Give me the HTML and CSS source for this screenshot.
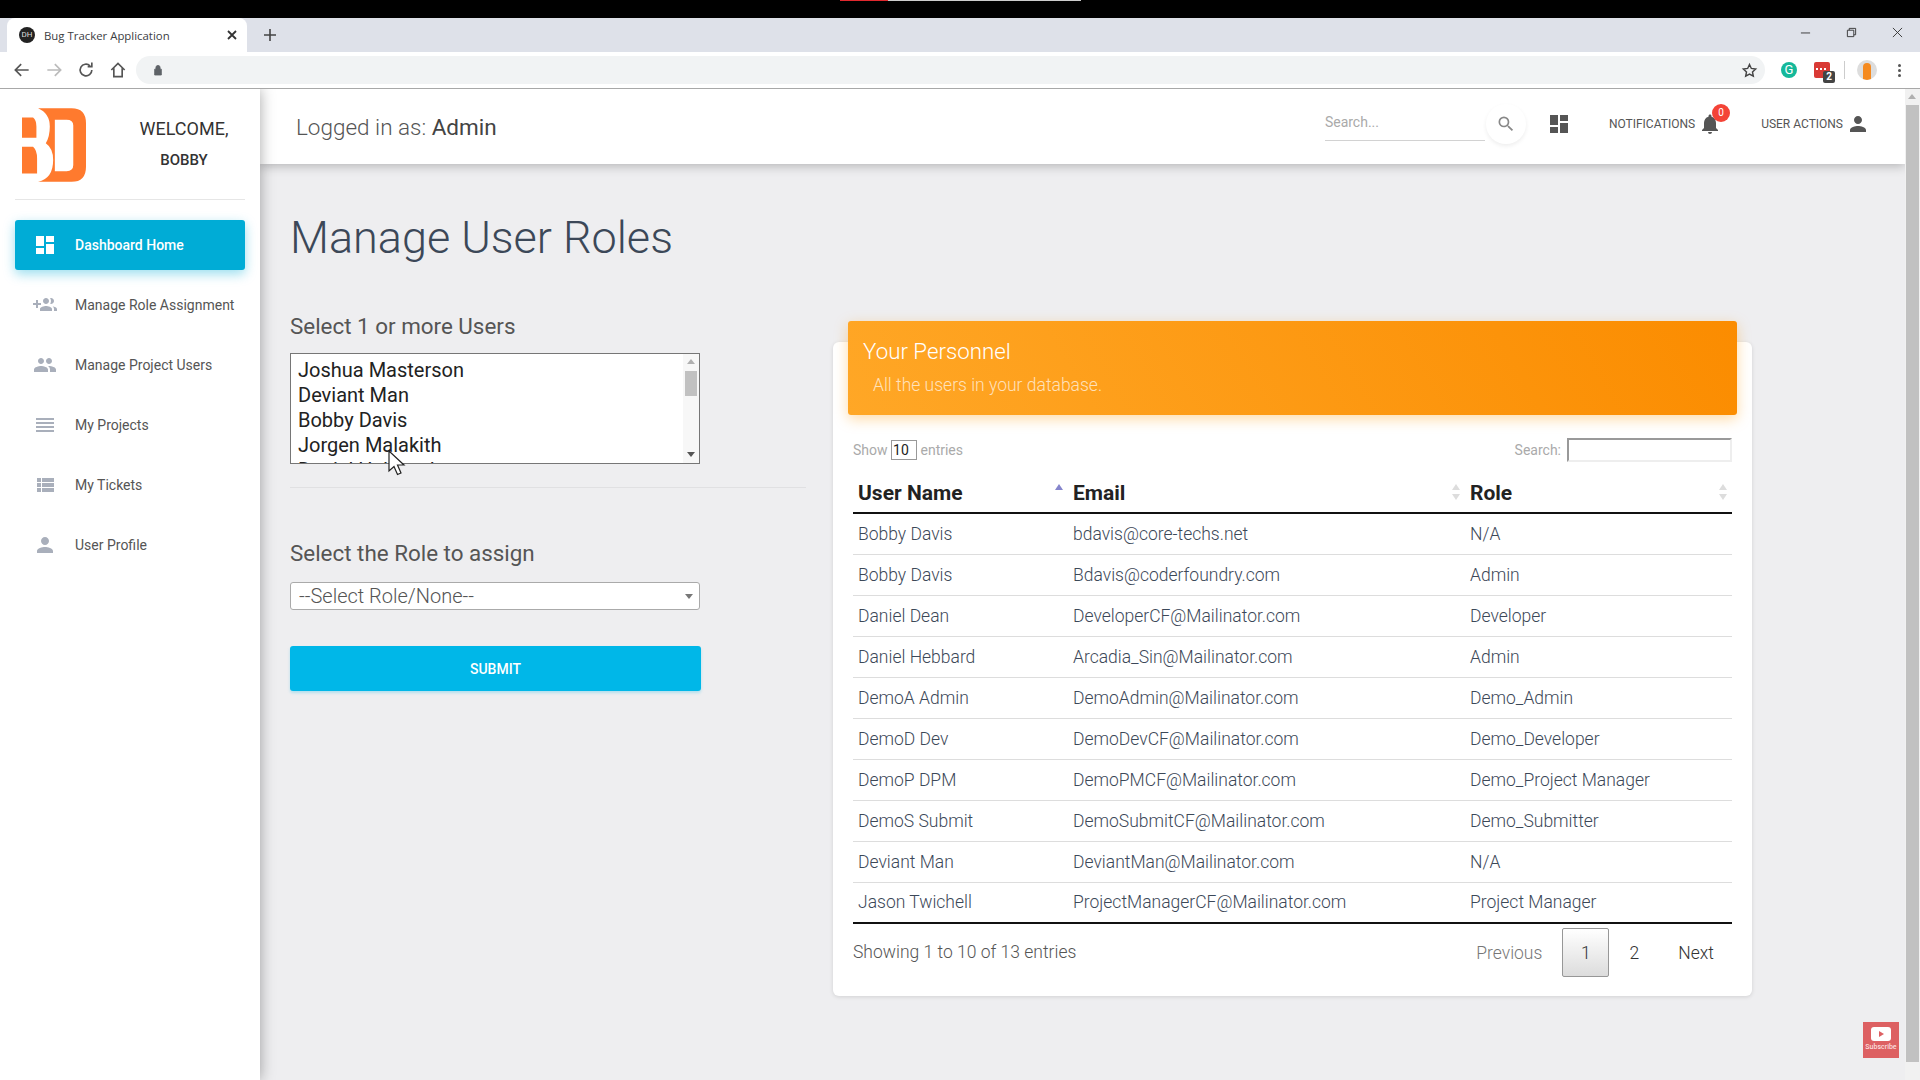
FILE: index.html
```html
<!DOCTYPE html>
<html lang="en">
<head>
  <meta charset="UTF-8">
  <meta name="viewport" content="width=device-width, initial-scale=1.0">
  <title>Bug Tracker Application</title>
  <link rel="stylesheet" href="styles.css">
</head>
<body>
  <div class="video-bar"><span class="video-played"></span><span class="video-buffered"></span></div>

  <div class="tabstrip">
    <div class="tab">
      <span class="favicon">DH</span>
      <span class="tab-title">Bug Tracker Application</span>
      <svg class="tab-close" viewBox="0 0 12 12"><path d="M2 2l8 8M10 2l-8 8"/></svg>
    </div>
    <svg class="new-tab" viewBox="0 0 14 14"><path d="M7 1v12M1 7h12"/></svg>
    <div class="window-controls">
      <svg viewBox="0 0 12 12"><path d="M1 6.500h10"/></svg>
      <svg viewBox="0 0 12 12"><path d="M1.500 3.500h7v7h-7zM3.500 3.500v-2h7v7h-2"/></svg>
      <svg viewBox="0 0 12 12"><path d="M1 1l10 10M11 1L1 11"/></svg>
    </div>
  </div>

  <div class="toolbar">
    <svg class="nav-icon" viewBox="0 0 24 24"><path d="M20 12H5M11 5l-7 7 7 7"/></svg>
    <svg class="nav-icon dim" viewBox="0 0 24 24"><path d="M4 12h15M13 5l7 7-7 7"/></svg>
    <svg class="nav-icon" viewBox="0 0 24 24"><path d="M19 12a7 7 0 1 1-2.200-5.100M19 3v5h-5"/></svg>
    <svg class="nav-icon" viewBox="0 0 24 24"><path d="M4 12l8-8 8 8M7 10v10h10V10"/></svg>
    <div class="omnibox">
      <svg class="lock" viewBox="0 0 12 14"><path d="M2 6h8v7H2zM3.500 6V4a2.500 2.500 0 0 1 5 0v2"/></svg>
      <svg class="star" viewBox="0 0 24 24"><path d="M12 3.500l2.600 5.600 6.100.7-4.500 4.200 1.200 6L12 17l-5.400 3 1.200-6-4.500-4.200 6.100-.7z"/></svg>
    </div>
    <div class="extensions">
      <span class="ext-grammarly">G</span>
      <span class="ext-red"><span class="ext-dots"></span><span class="ext-count">2</span></span>
      <span class="ext-divider"></span>
      <span class="ext-avatar"><span></span></span>
      <span class="ext-menu"><i></i><i></i><i></i></span>
    </div>
  </div>

  <div class="page">
    <aside class="sidebar">
      <div class="brand">
        <svg class="logo" viewBox="37 40 191 220">
          <path fill="#ff7a2e" fill-rule="evenodd" d="M85 40H185Q228 40 228 85V215Q228 260 185 260H85Q130 250 130 195Q130 160 108 145Q120 125 120 95Q120 55 85 40ZM135 75V228H170Q190 228 190 210V92Q190 75 170 75Z"/>
          <path fill="#ff7a2e" d="M37 68H70Q80 75 80 95V128H37ZM37 155H70Q82 165 82 190V235H37Z"/>
        </svg>
        <div class="welcome">
          <div class="welcome-line">WELCOME,</div>
          <div class="welcome-name">BOBBY</div>
        </div>
      </div>
      <nav class="nav">
        <a class="nav-item active">
          <svg viewBox="0 0 24 24"><path d="M3 13h8V3H3zm0 8h8v-6H3zm10 0h8V11h-8zm0-18v6h8V3z"/></svg>
          Dashboard Home
        </a>
        <a class="nav-item">
          <svg viewBox="0 0 24 24"><path d="M8 10H5V7H3v3H0v2h3v3h2v-3h3zm10 1c1.660 0 3-1.340 3-3s-1.340-3-3-3c-.3 0-.6.05-.9.140.57.810.9 1.790.9 2.860s-.33 2.050-.9 2.860c.3.090.6.140.9.140zm-5 0c1.660 0 3-1.340 3-3s-1.340-3-3-3-3 1.340-3 3 1.340 3 3 3zm6.600 2.160c.83.730 1.400 1.660 1.400 2.840v2h3v-2c0-1.540-2.370-2.490-4.400-2.840zM13 13c-2 0-6 1-6 3v2h12v-2c0-2-4-3-6-3z"/></svg>
          Manage Role Assignment
        </a>
        <a class="nav-item">
          <svg viewBox="0 0 24 24"><path d="M16 11c1.660 0 2.990-1.340 2.990-3S17.660 5 16 5s-3 1.340-3 3 1.340 3 3 3zm-8 0c1.660 0 2.990-1.340 2.990-3S9.660 5 8 5 5 6.340 5 8s1.340 3 3 3zm0 2c-2.330 0-7 1.170-7 3.500V19h14v-2.500C15 14.170 10.330 13 8 13zm8 0c-.29 0-.62.020-.97.050 1.160.840 1.970 1.970 1.970 3.450V19h6v-2.500c0-2.330-4.670-3.500-7-3.500z"/></svg>
          Manage Project Users
        </a>
        <a class="nav-item">
          <svg viewBox="0 0 24 24"><path d="M3 15h18v-2H3zm0 4h18v-2H3zm0-8h18V9H3zm0-6v2h18V5z"/></svg>
          My Projects
        </a>
        <a class="nav-item">
          <svg viewBox="0 0 24 24"><path d="M4 14h4v-4H4zm0 5h4v-4H4zM4 9h4V5H4zm5 5h12v-4H9zm0 5h12v-4H9zM9 5v4h12V5z"/></svg>
          My Tickets
        </a>
        <a class="nav-item">
          <svg viewBox="0 0 24 24"><path d="M12 12c2.210 0 4-1.790 4-4s-1.790-4-4-4-4 1.790-4 4 1.790 4 4 4zm0 2c-2.670 0-8 1.340-8 4v2h16v-2c0-2.660-5.330-4-8-4z"/></svg>
          User Profile
        </a>
      </nav>
    </aside>

    <div class="content">
      <header class="topbar">
        <div class="logged-in">Logged in as: <span>Admin</span></div>
        <div class="top-actions">
          <div class="top-search">Search...</div>
          <span class="search-btn">
            <svg viewBox="0 0 24 24"><path d="M15.500 14h-.79l-.28-.27A6.470 6.470 0 0 0 16 9.500 6.500 6.500 0 1 0 9.500 16c1.610 0 3.090-.59 4.230-1.570l.27.28v.79l5 4.990L20.490 19zm-6 0C7.010 14 5 11.990 5 9.500S7.010 5 9.500 5 14 7.010 14 9.500 11.990 14 9.500 14z"/></svg>
          </span>
          <svg class="top-dash" viewBox="0 0 24 24"><path d="M3 13h8V3H3zm0 8h8v-6H3zm10 0h8V11h-8zm0-18v6h8V3z"/></svg>
          <div class="top-link notif">
            NOTIFICATIONS
            <span class="bell">
              <svg viewBox="0 0 24 24"><path d="M12 22c1.100 0 2-.9 2-2h-4a2 2 0 0 0 2 2zm6-6v-5c0-3.070-1.640-5.640-4.500-6.320V4c0-.83-.67-1.500-1.500-1.500s-1.500.67-1.500 1.500v.68C7.630 5.360 6 7.920 6 11v5l-2 2v1h16v-1z"/></svg>
              <span class="badge">0</span>
            </span>
          </div>
          <div class="top-link">
            USER ACTIONS
            <svg class="top-user" viewBox="0 0 24 24"><path d="M12 12c2.210 0 4-1.790 4-4s-1.790-4-4-4-4 1.790-4 4 1.790 4 4 4zm0 2c-2.670 0-8 1.340-8 4v2h16v-2c0-2.660-5.330-4-8-4z"/></svg>
          </div>
        </div>
      </header>

      <main class="main">
        <h1 class="page-title">Manage User Roles</h1>
        <div class="columns">
          <section class="form-col">
            <h2 class="form-label">Select 1 or more Users</h2>
            <div class="listbox">
              <div class="listbox-items">
                <div>Joshua Masterson</div>
                <div>Deviant Man</div>
                <div>Bobby Davis</div>
                <div>Jorgen Malakith</div>
                <div>Daniel Hebbard</div>
              </div>
              <div class="list-scroll">
                <span class="arrow-up"></span>
                <span class="list-thumb"></span>
                <span class="arrow-down"></span>
              </div>
            </div>
            <hr class="divider">
            <h2 class="form-label role-label">Select the Role to assign</h2>
            <div class="role-select">--Select Role/None--<span class="arrow-down"></span></div>
            <button class="submit-btn">SUBMIT</button>
          </section>

          <section class="card">
            <div class="card-header">
              <h3>Your Personnel</h3>
              <p>All the users in your database.</p>
            </div>
            <div class="table-tools">
              <div>Show <span class="length-box">10</span> entries</div>
              <div class="table-search">Search: <span class="search-box"></span></div>
            </div>
            <table class="users">
              <thead>
                <tr>
                  <th class="col-name">User Name<span class="sort sorted"></span></th>
                  <th class="col-email">Email<span class="sort"></span></th>
                  <th>Role<span class="sort"></span></th>
                </tr>
              </thead>
              <tbody>
                <tr><td>Bobby Davis</td><td>bdavis@core-techs.net</td><td>N/A</td></tr>
                <tr><td>Bobby Davis</td><td>Bdavis@coderfoundry.com</td><td>Admin</td></tr>
                <tr><td>Daniel Dean</td><td>DeveloperCF@Mailinator.com</td><td>Developer</td></tr>
                <tr><td>Daniel Hebbard</td><td>Arcadia_Sin@Mailinator.com</td><td>Admin</td></tr>
                <tr><td>DemoA Admin</td><td>DemoAdmin@Mailinator.com</td><td>Demo_Admin</td></tr>
                <tr><td>DemoD Dev</td><td>DemoDevCF@Mailinator.com</td><td>Demo_Developer</td></tr>
                <tr><td>DemoP DPM</td><td>DemoPMCF@Mailinator.com</td><td>Demo_Project Manager</td></tr>
                <tr><td>DemoS Submit</td><td>DemoSubmitCF@Mailinator.com</td><td>Demo_Submitter</td></tr>
                <tr><td>Deviant Man</td><td>DeviantMan@Mailinator.com</td><td>N/A</td></tr>
                <tr><td>Jason Twichell</td><td>ProjectManagerCF@Mailinator.com</td><td>Project Manager</td></tr>
              </tbody>
            </table>
            <div class="table-foot">
              <div class="table-info">Showing 1 to 10 of 13 entries</div>
              <div class="pager">
                <span class="page-prev">Previous</span>
                <span class="page-current">1</span>
                <span class="page-num">2</span>
                <span class="page-next">Next</span>
              </div>
            </div>
          </section>
        </div>
      </main>
    </div>

    <div class="page-scroll">
      <span class="arrow-up"></span>
      <span class="page-thumb"></span>
    </div>

    <div class="subscribe">
      <span class="sub-icon"><span></span></span>
      <span class="sub-text">Subscribe</span>
    </div>

    <svg class="cursor" viewBox="0 0 18 26"><path d="M1 1v20l5-4.500 3.500 8 3.500-1.500-3.500-8H16z"/></svg>
  </div>
</body>
</html>
```

FILE: styles.css
```css
* {
  box-sizing: border-box;
}
html, body {
  height: 100%;
}
body {
  margin: 0;
  display: flex;
  flex-direction: column;
  overflow: hidden;
  font-family: Roboto, "Liberation Sans", sans-serif;
  background-color: #eeeef0;
  color: #3c4858;
}

/* browser chrome */
.video-bar {
  height: 18px;
  flex: none;
  display: flex;
  align-items: flex-start;
  padding-left: 840px;
  background: #000;
}
.video-played {
  width: 48px;
  height: 1px;
  background: #e0282e;
}
.video-buffered {
  width: 193px;
  height: 1px;
  background: #ccc;
}
.tabstrip {
  height: 34px;
  flex: none;
  display: flex;
  align-items: center;
  background: #dee1e9;
}
.tab {
  width: 240px;
  height: 34px;
  margin-left: 7px;
  padding: 0 9px 0 12px;
  display: flex;
  align-items: center;
  background: #fff;
  border-radius: 8px 8px 0 0;
}
.favicon {
  width: 16px;
  height: 16px;
  border-radius: 50%;
  background: #222;
  color: #ddd;
  font-size: 8px;
  line-height: 16px;
  text-align: center;
}
.tab-title {
  margin-left: 9px;
  flex: 1;
  font-size: 11.4px;
  color: #3c4043;
  font-family: "Open Sans", sans-serif;
}
.tab-close {
  width: 12px;
  height: 12px;
  fill: none;
  stroke: #333;
  stroke-width: 1.800;
}
.new-tab {
  width: 14px;
  height: 14px;
  margin-left: 16px;
  fill: none;
  stroke: #444;
  stroke-width: 1.600;
}
.window-controls {
  margin-left: auto;
  padding-right: 17px;
  display: flex;
  gap: 35px;
  margin-top: -5px;
}
.window-controls svg {
  width: 11px;
  height: 11px;
  fill: none;
  stroke: #333;
  stroke-width: 1;
}
.toolbar {
  position: relative;
  z-index: 5;
  height: 37px;
  flex: none;
  display: flex;
  align-items: center;
  padding-left: 12px;
  background: #fff;
  border-bottom: 1px solid #a8a8a8;
}
.nav-icon {
  width: 20px;
  height: 20px;
  margin-right: 12px;
  fill: none;
  stroke: #555;
  stroke-width: 2;
}
.nav-icon.dim {
  stroke: #bbb;
}
.omnibox {
  width: 1629px;
  height: 28px;
  margin-left: -4px;
  padding: 0 7px 0 17px;
  display: flex;
  align-items: center;
  justify-content: space-between;
  background: #f1f3f4;
  border-radius: 14px;
}
.lock {
  width: 10px;
  height: 12px;
  fill: #5f6368;
  stroke: #5f6368;
}
.star {
  width: 17px;
  height: 17px;
  fill: none;
  stroke: #444;
  stroke-width: 2;
}
.extensions {
  display: flex;
  align-items: center;
  margin-left: 16px;
}
.ext-grammarly {
  width: 16px;
  height: 16px;
  border-radius: 50%;
  background: #15b89a;
  color: #fff;
  font-size: 13px;
  line-height: 16px;
  text-align: center;
}
.ext-red {
  position: relative;
  width: 16px;
  height: 16px;
  margin-left: 17px;
  background: #d93a35;
  border-radius: 2px;
}
.ext-dots {
  position: absolute;
  left: 2px;
  top: 6px;
  width: 2px;
  height: 2px;
  background: #fff;
  box-shadow: 4px 0 #fff, 8px 0 #fff;
}
.ext-count {
  position: absolute;
  left: 9px;
  top: 9px;
  width: 12px;
  height: 12px;
  background: #444;
  color: #fff;
  border-radius: 2px;
  font-size: 10px;
  font-weight: 700;
  line-height: 12px;
  text-align: center;
}
.ext-divider {
  width: 1px;
  height: 18px;
  margin-left: 14px;
  background: #ccc;
}
.ext-avatar {
  width: 20px;
  height: 20px;
  margin-left: 12px;
  display: flex;
  justify-content: center;
  background: #ddd;
  border-radius: 50%;
  overflow: hidden;
}
.ext-avatar span {
  width: 8px;
  height: 20px;
  margin-top: 3px;
  background: #f58a1f;
  border-radius: 4px 4px 0 0;
}
.ext-menu {
  margin-left: 21px;
  display: flex;
  flex-direction: column;
  gap: 2px;
}
.ext-menu i {
  width: 3px;
  height: 3px;
  background: #555;
  border-radius: 50%;
}

/* page */
.page {
  position: relative;
  flex: 1;
  min-height: 0;
  display: flex;
}
.sidebar {
  width: 260px;
  flex: none;
  background: #fff;
  box-shadow: 0 0 14px rgba(0, 0, 0, 0.35);
  z-index: 2;
  padding: 0 15px;
}
.brand {
  height: 111px;
  padding: 19px 0 0 7px;
  display: flex;
  border-bottom: 1px solid #e6e6e6;
}
.logo {
  width: 64px;
  height: 74px;
}
.welcome {
  flex: 1;
  padding: 11px 0 0 37px;
  text-align: center;
  color: #333;
}
.welcome-line {
  font-size: 18px;
  line-height: 20px;
}
.welcome-name {
  margin-top: 11px;
  font-size: 15px;
  line-height: 20px;
  font-weight: 500;
}
.nav {
  padding-top: 20px;
}
.nav-item {
  height: 50px;
  margin-bottom: 10px;
  padding-left: 18px;
  display: flex;
  align-items: center;
  gap: 18px;
  border-radius: 3px;
  font-size: 14px;
  color: #555;
}
.nav-item svg {
  width: 24px;
  height: 24px;
  fill: #a9afbb;
}
.nav-item.active {
  background: #00acd6;
  color: #fff;
  font-weight: 500;
  box-shadow: 0 4px 12px rgba(0, 172, 214, 0.4);
}
.nav-item.active svg {
  fill: #fff;
}
.content {
  flex: 1;
  min-width: 0;
  display: flex;
  flex-direction: column;
}
.topbar {
  height: 75px;
  flex: none;
  padding: 0 35px 0 36px;
  display: flex;
  align-items: center;
  justify-content: space-between;
  background: #fff;
  box-shadow: 0 2px 10px rgba(0, 0, 0, 0.25);
}
.logged-in {
  font-size: 22.5px;
  font-weight: 300;
  color: #555;
}
.logged-in span {
  font-weight: 400;
  color: #444;
}
.top-actions {
  display: flex;
  align-items: center;
  margin-top: -5px;
}
.top-search {
  width: 160px;
  height: 34px;
  padding-top: 7px;
  border-bottom: 1px solid #d2d2d2;
  font-size: 14px;
  color: #aaa;
}
.search-btn {
  width: 40px;
  height: 40px;
  margin-left: 1px;
  display: flex;
  align-items: center;
  justify-content: center;
  border-radius: 50%;
  box-shadow: 0 2px 4px rgba(0, 0, 0, 0.07);
}
.search-btn svg {
  width: 20px;
  height: 20px;
  fill: #888;
}
.top-dash {
  width: 24px;
  height: 24px;
  margin-left: 21px;
  fill: #555;
}
.top-link {
  display: flex;
  align-items: center;
  font-size: 12px;
  color: #555;
}
.notif {
  margin-left: 38px;
}
.bell {
  position: relative;
  width: 24px;
  height: 24px;
  margin-left: 3px;
  margin-right: 39px;
}
.bell svg, .top-user {
  width: 24px;
  height: 24px;
  fill: #555;
}
.top-user {
  margin-left: 3px;
}
.badge {
  position: absolute;
  left: 14px;
  top: -8px;
  width: 18px;
  height: 18px;
  background: #f44336;
  color: #fff;
  border-radius: 50%;
  font-size: 10px;
  line-height: 18px;
  text-align: center;
}
.main {
  flex: 1;
  padding: 44px 0 0 30px;
}
.page-title {
  margin: 0;
  font-size: 45px;
  line-height: 60px;
  font-weight: 300;
  color: #3c4858;
}
.columns {
  display: flex;
  margin-top: 14px;
}
.form-col {
  width: 516px;
  flex: none;
  padding-top: 30px;
}
.form-label {
  margin: 0;
  font-size: 22.4px;
  line-height: 28px;
  font-weight: 400;
  color: #555;
}
.listbox {
  width: 410px;
  height: 111px;
  margin-top: 13px;
  display: flex;
  justify-content: space-between;
  background: #fff;
  border: 1px solid #767676;
  overflow: hidden;
}
.listbox-items {
  padding: 4px 0 0 7px;
  font-size: 20px;
  line-height: 25px;
  color: #222;
}
.list-scroll {
  position: relative;
  width: 16px;
  background: #f7f7f7;
}
.list-scroll .arrow-up {
  position: absolute;
  top: 5px;
  left: 4px;
}
.list-scroll .arrow-down {
  position: absolute;
  bottom: 6px;
  left: 4px;
  border-top-color: #555;
}
.list-thumb {
  position: absolute;
  left: 2px;
  top: 17px;
  width: 12px;
  height: 25px;
  background: #c1c1c1;
}
.arrow-up {
  display: block;
  width: 0;
  height: 0;
  border: 4px solid transparent;
  border-top: 0;
  border-bottom: 5px solid #b0b0b0;
}
.arrow-down {
  display: block;
  width: 0;
  height: 0;
  border: 4px solid transparent;
  border-bottom: 0;
  border-top: 5px solid #777;
}
.divider {
  height: 1px;
  margin: 23px 0 0;
  border: 0;
  background: #e0e0e2;
}
.role-label {
  margin-top: 51px;
}
.role-select {
  width: 410px;
  height: 28px;
  margin-top: 15px;
  padding-left: 8px;
  display: flex;
  align-items: center;
  justify-content: space-between;
  padding-right: 6px;
  background: #fff;
  border: 1px solid #aaa;
  border-radius: 3px;
  font-size: 20px;
  font-weight: 300;
  color: #555;
}
.submit-btn {
  display: block;
  width: 411px;
  height: 45px;
  margin-top: 36px;
  padding: 0;
  background: #00b7e8;
  color: #fff;
  border: none;
  border-radius: 3px;
  font-family: inherit;
  font-size: 14px;
  font-weight: 500;
  box-shadow: 0 2px 3px rgba(0, 183, 232, 0.25);
}

/* personnel card */
.card {
  width: 919px;
  height: 654px;
  margin: 60px 0 0 27px;
  padding: 0 20px;
  background: #fff;
  border-radius: 6px;
  box-shadow: 0 1px 4px rgba(0, 0, 0, 0.12);
}
.card-header {
  height: 94px;
  margin: -21px -5px 0;
  padding: 13px 15px 0;
  background: linear-gradient(60deg, #ffa726, #fb8c00);
  border-radius: 3px;
  color: #fff;
  box-shadow: 0 4px 14px rgba(255, 152, 0, 0.35);
}
.card-header h3 {
  margin: 0;
  font-size: 22.3px;
  line-height: 34px;
  font-weight: 300;
}
.card-header p {
  margin: 6px 0 0 10px;
  font-size: 17.5px;
  line-height: 22px;
  font-weight: 300;
  color: rgba(255, 255, 255, 0.7);
}
.table-tools {
  height: 24px;
  margin-top: 23px;
  display: flex;
  align-items: center;
  justify-content: space-between;
  font-size: 14px;
  color: #aaa;
}
.length-box {
  display: inline-block;
  width: 26px;
  height: 20px;
  padding-left: 1px;
  border: 1px solid #999;
  color: #222;
  line-height: 18px;
}
.table-search {
  display: flex;
  align-items: center;
  gap: 6px;
}
.search-box {
  width: 165px;
  height: 24px;
  border: 2px solid;
  border-color: #999 #eee #eee #999;
}
.users {
  width: 100%;
  margin-top: 9px;
  border-collapse: collapse;
  table-layout: fixed;
}
.users th {
  position: relative;
  height: 42px;
  padding: 2px 5px 0;
  text-align: left;
  font-size: 21px;
  font-weight: 700;
  color: #222;
  border-bottom: 2px solid #111;
}
.col-name {
  width: 215px;
}
.col-email {
  width: 397px;
}
.users td {
  height: 41px;
  padding: 0 5px;
  font-size: 17.5px;
  font-weight: 300;
  color: #3c4858;
  border-top: 1px solid #ddd;
}
.users tbody tr:first-child td {
  border-top: 0;
}
.users tbody tr:last-child td {
  border-bottom: 2px solid #111;
}
.sort {
  position: absolute;
  right: 5px;
  top: 13px;
  width: 8px;
  height: 16px;
}
.sort::before, .sort::after {
  content: "";
  position: absolute;
  left: 0;
  border: 4px solid transparent;
}
.sort::before {
  top: 0;
  border-top: 0;
  border-bottom: 6px solid #ddd;
}
.sort::after {
  bottom: 0;
  border-bottom: 0;
  border-top: 6px solid #ddd;
}
.sort.sorted::before {
  border-bottom-color: #8585cc;
}
.sort.sorted::after {
  display: none;
}
.table-foot {
  display: flex;
  justify-content: space-between;
  align-items: center;
  margin-top: 4px;
}
.table-info {
  font-size: 17.5px;
  font-weight: 300;
  color: #555;
  padding-bottom: 2px;
}
.pager {
  display: flex;
  align-items: center;
  font-size: 17.5px;
  font-weight: 300;
  color: #333;
  padding-right: 18px;
}
.page-prev {
  margin-right: 20px;
  color: #777;
}
.page-current {
  width: 47px;
  height: 49px;
  display: flex;
  align-items: center;
  justify-content: center;
  background: linear-gradient(#fff, #dcdcdc);
  border: 1px solid #979797;
  border-radius: 2px;
}
.page-num {
  width: 50px;
  text-align: center;
}
.page-next {
  margin-left: 19px;
}

/* fake page scrollbar, video overlay and pointer */
.page-scroll {
  width: 15px;
  flex: none;
  background: #f1f1f1;
  z-index: 3;
}
.page-scroll .arrow-up {
  margin: 5px 0 0 3px;
}
.page-thumb {
  display: block;
  height: 957px;
  margin: 6px 0 0 1px;
  width: 13px;
  background: #c1c1c1;
}
.subscribe {
  position: absolute;
  right: 21px;
  bottom: 22px;
  width: 36px;
  height: 36px;
  background: #dd6062;
  text-align: center;
  z-index: 4;
}
.sub-icon {
  display: flex;
  align-items: center;
  justify-content: center;
  width: 20px;
  height: 14px;
  margin: 5px auto 0;
  background: #fff;
  border-radius: 3px;
}
.sub-icon span {
  width: 0;
  height: 0;
  border: 3px solid transparent;
  border-right: 0;
  border-left: 5px solid #dd6062;
}
.sub-text {
  display: block;
  margin-top: 2px;
  font-size: 7px;
  font-weight: 500;
  color: #fbdede;
}
.cursor {
  position: absolute;
  left: 388px;
  top: 361px;
  width: 18px;
  height: 26px;
  z-index: 5;
  fill: #fff;
  stroke: #222;
  stroke-width: 1.200;
}
```
